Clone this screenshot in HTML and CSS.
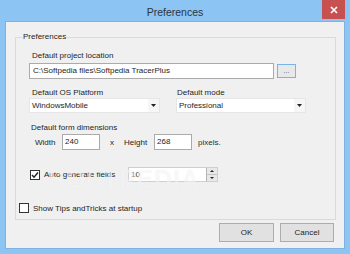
FILE: index.html
```html
<!DOCTYPE html>
<html lang="en">
<head>
    <meta charset="UTF-8">
    <title>Preferences</title>
    <link rel="stylesheet" href="styles.css">
</head>
<body>
    <div class="window">
        <div class="titlebar">
            <span class="title">Preferences</span>
            <span class="close">
                <svg width="8" height="8" viewBox="0 0 8 8"><path d="M1 1L7 7M7 1L1 7" stroke="#fff" stroke-width="1.7"/></svg>
            </span>
        </div>

        <div class="client">
            <div class="group">
                <span class="group-title">Preferences</span>

                <div class="location">
                    <div class="label">Default project location</div>
                    <div class="path-row">
                        <div class="textbox path">C:\Softpedia files\Softpedia TracerPlus</div>
                        <div class="browse">...</div>
                    </div>
                </div>

                <div class="columns">
                    <div class="col col-platform">
                        <div class="label">Default OS Platform</div>
                        <div class="combo">
                            <span class="combo-text">WindowsMobile</span>
                            <span class="combo-btn"><svg width="5" height="3" viewBox="0 0 5 3"><polygon points="0,0 5,0 2.5,3" fill="#222"/></svg></span>
                        </div>
                    </div>
                    <div class="col col-mode">
                        <div class="label">Default mode</div>
                        <div class="combo">
                            <span class="combo-text">Professional</span>
                            <span class="combo-btn"><svg width="5" height="3" viewBox="0 0 5 3"><polygon points="0,0 5,0 2.5,3" fill="#222"/></svg></span>
                        </div>
                    </div>
                </div>

                <div class="dims">
                    <div class="label">Default form dimensions</div>
                    <div class="dim-row">
                        <span class="dim-label width-label">Width</span>
                        <div class="textbox dim-box">240</div>
                        <span class="dim-label times">x</span>
                        <span class="dim-label height-label">Height</span>
                        <div class="textbox dim-box">268</div>
                        <span class="dim-label pixels">pixels.</span>
                    </div>
                </div>

                <div class="check-row auto">
                    <span class="checkbox">
                        <svg width="8" height="8" viewBox="0 0 8 8"><path d="M1 4L3 6.2L7 1.5" fill="none" stroke="#222" stroke-width="1.4"/></svg>
                    </span>
                    <span class="check-label auto-label">Auto generate fields</span>
                    <div class="numeric">
                        <span class="numeric-text">10</span>
                        <span class="spin">
                            <span class="spin-btn"><svg width="4" height="2" viewBox="0 0 4 2"><polygon points="0,2 4,2 2,0" fill="#222"/></svg></span>
                            <span class="spin-btn"><svg width="4" height="2" viewBox="0 0 4 2"><polygon points="0,0 4,0 2,2" fill="#222"/></svg></span>
                        </span>
                    </div>
                </div>

                <div class="check-row tips">
                    <span class="checkbox"></span>
                    <span class="check-label">Show Tips andTricks at startup</span>
                </div>
            </div>

            <div class="buttons">
                <div class="button ok">OK</div>
                <div class="button cancel">Cancel</div>
            </div>
        </div>

        <div class="watermark">SOFTPEDIA</div>
    </div>
</body>
</html>
```

FILE: styles.css
```css
body { margin: 0; font-family: "Liberation Sans", Arial, sans-serif; }

.window { position: relative; width: 350px; height: 254px; box-sizing: border-box; background: #8cc4f4; padding-bottom: 6px; display: flex; flex-direction: column; overflow: hidden; }

/* title bar */
.titlebar { height: 22px; display: flex; justify-content: center; align-items: center; flex: none; }
.title { font-size: 10.5px; color: #2b3440; margin-top: 1px; }
.close { position: absolute; top: 0; right: 5px; width: 23px; height: 19px; background: #c75050; display: flex; align-items: center; justify-content: center; }
.close svg { display: block; }

/* client area */
.client { flex: 1; margin: 0 6px; background: #f0f0f0; box-shadow: 0 0 0 1px #7fb2e2; font-size: 8px; color: #1e1e1e; display: flex; flex-direction: column; }

.group { margin: 15px 0 0 9px; width: 321px; height: 183px; box-sizing: border-box; border: 1px solid #dadada; }
.group-title { display: block; width: max-content; margin: -6px 0 0 6px; padding: 0 1px; line-height: 10px; background: #f0f0f0; }

.label { line-height: 10px; white-space: nowrap; }

.textbox { box-sizing: border-box; height: 16px; border: 1px solid #ababab; background: #fff; line-height: 14px; padding-left: 3px; white-space: nowrap; overflow: hidden; }

/* project location */
.location { margin: 9px 0 0 13px; }
.location .label { padding-left: 3px; }
.path-row { margin-top: 2px; display: flex; align-items: center; }
.path { width: 245px; }
.browse { margin-left: 3px; width: 19px; height: 14px; box-sizing: border-box; border: 1px solid #79b3ec; background: #e6e8ea; color: #555; font-size: 7px; line-height: 12px; text-align: center; }

/* platform / mode */
.columns { margin: 9px 0 0 13px; display: flex; gap: 16px; }
.col-platform { width: 131px; }
.col-mode { width: 130px; }
.col-platform .label { padding-left: 3px; }
.col-mode .label { padding-left: 1px; }
.combo { box-sizing: border-box; height: 15px; border: 1px solid #e6e6e6; background: #fff; display: flex; align-items: stretch; }
.combo-text { flex: 1; padding-left: 2px; line-height: 13px; }
.combo-btn { width: 11px; background: #f6f6f6; display: flex; align-items: center; justify-content: center; }
.combo-btn svg { display: block; }

/* form dimensions */
.dims { margin: 10px 0 0 15px; }
.dim-row { margin: 1px 0 0 4px; display: flex; align-items: center; }
.width-label { width: 27px; }
.dim-box { width: 38px; padding-left: 2px; }
.times { width: 24px; padding-left: 10px; box-sizing: border-box; }
.height-label { width: 30px; }
.pixels { margin-left: 6px; color: #2a2f3c; }

/* checkboxes */
.check-row { display: flex; align-items: center; }
.auto { margin: 17px 0 0 14px; height: 15px; }
.tips { margin: 20px 0 0 3px; height: 12px; }
.checkbox { width: 10px; height: 10px; box-sizing: border-box; border: 1px solid #333; background: #fff; display: flex; align-items: center; justify-content: center; flex: none; }
.checkbox svg { display: block; }
.check-label { margin-left: 4px; white-space: nowrap; }
.auto-label { width: 84px; }

.numeric { box-sizing: border-box; width: 90px; height: 15px; border: 1px solid #cfcfcf; background: #fff; display: flex; }
.numeric-text { flex: 1; padding-left: 2px; line-height: 13px; }
.spin { width: 10px; display: flex; flex-direction: column; border-left: 1px solid #b5b5b5; }
.spin-btn { flex: 1; background: #e8e8e8; display: flex; align-items: center; justify-content: center; border-top: 1px solid #c4c4c4; }
.spin-btn:first-child { border-top: none; }
.spin-btn svg { display: block; }

/* dialog buttons */
.buttons { margin: 3px 10px 0 0; display: flex; justify-content: flex-end; gap: 6px; }
.button { box-sizing: border-box; height: 19px; border: 1px solid #adadad; background: #e1e1e1; line-height: 17px; text-align: center; }
.ok { width: 55px; }
.cancel { width: 54px; }

/* faint watermark over the dialog */
.watermark { position: absolute; left: 48px; top: 165px; font-size: 25px; font-weight: bold; letter-spacing: 1px; color: rgba(255, 255, 255, 0.55); text-shadow: 0 0 1px rgba(0, 0, 0, 0.06); pointer-events: none; }
```
